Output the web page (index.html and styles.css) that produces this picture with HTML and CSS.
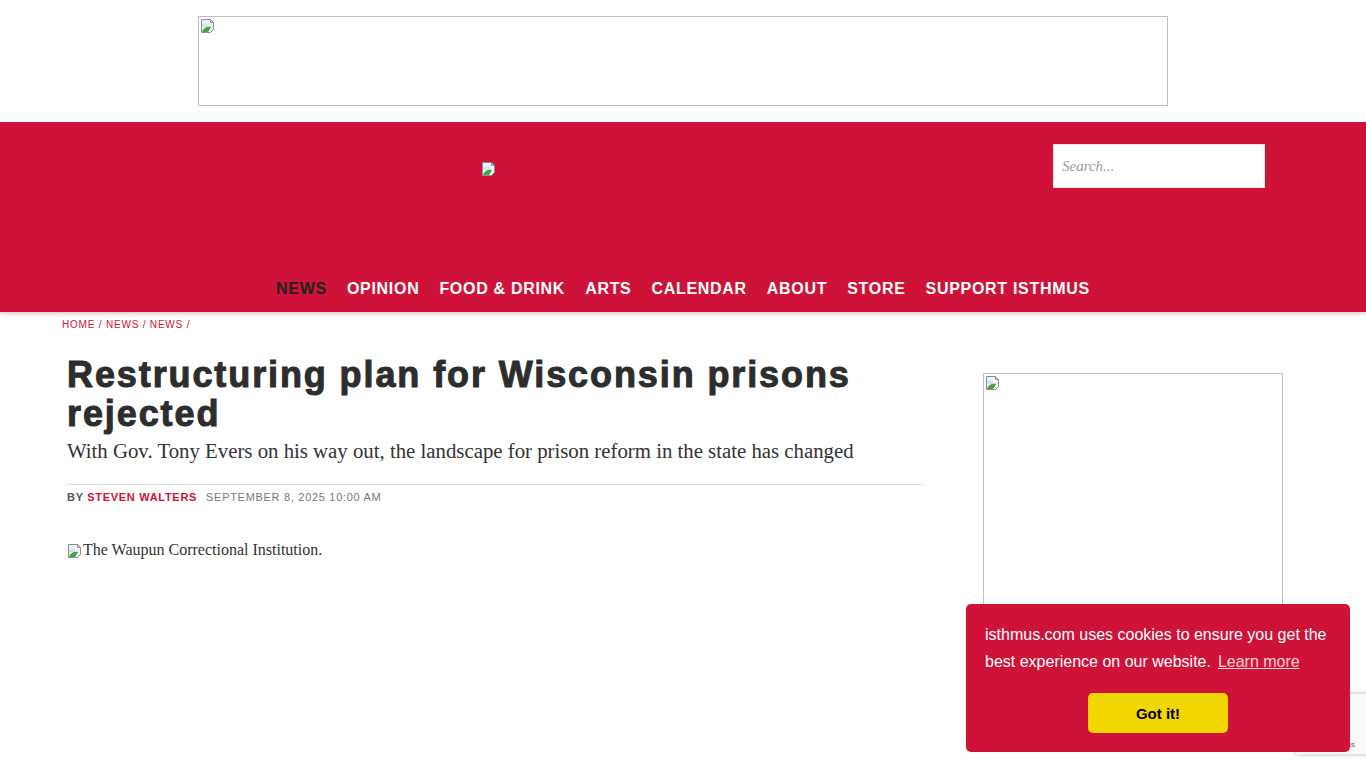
FILE: index.html
```html
<!DOCTYPE html>
<html lang="en">

<head>
    <meta charset="UTF-8">
    <meta name="viewport" content="width=device-width, initial-scale=1.0">
    <title>Restructuring plan for Wisconsin prisons rejected | Isthmus</title>
    <link rel="stylesheet" href="styles.css">
</head>

<body>
    <div class="top-ad">
        <div class="ad-box ad-leader">
            <svg class="broken" width="16" height="16" viewBox="0 0 16 16">
                <path d="M1.5 1.5h9l3 3v7l-3 3h-9z" fill="#eef3f8" stroke="#8a8f96" />
                <path d="M2 6c2-1 4-1 6 0v3H2z" fill="#cfe3f5" />
                <path d="M2 14c1-4 5-6 9-5l-3 5z" fill="#4aa23c" />
                <path d="M10.5 1.5v3h3" fill="none" stroke="#8a8f96" />
            </svg>
        </div>
    </div>

    <header class="masthead">
        <div class="masthead-inner">
            <div class="logo">
                <svg class="broken" width="16" height="16" viewBox="0 0 16 16">
                    <path d="M1.5 1.5h9l3 3v7l-3 3h-9z" fill="#eef3f8" stroke="#8a8f96" />
                    <path d="M2 6c2-1 4-1 6 0v3H2z" fill="#cfe3f5" />
                    <path d="M2 14c1-4 5-6 9-5l-3 5z" fill="#4aa23c" />
                    <path d="M10.5 1.5v3h3" fill="none" stroke="#8a8f96" />
                </svg>
            </div>
            <form class="search">
                <input type="text" placeholder="Search...">
            </form>
        </div>
        <nav class="main-nav">
            <ul>
                <li class="active">News</li>
                <li>Opinion</li>
                <li>Food &amp; Drink</li>
                <li>Arts</li>
                <li>Calendar</li>
                <li>About</li>
                <li>Store</li>
                <li>Support Isthmus</li>
            </ul>
        </nav>
    </header>

    <div class="page">
        <div class="crumbs">Home / News / News /</div>
        <div class="cols">
            <article class="story">
                <h1>Restructuring plan for Wisconsin prisons rejected</h1>
                <p class="dek">With Gov. Tony Evers on his way out, the landscape for prison reform in the state has changed</p>
                <div class="byline">
                    <span>By <a class="author">Steven Walters</a></span>
                    <span class="date">September 8, 2025 10:00 AM</span>
                </div>
                <div class="lead-img">
                    <svg class="broken" width="16" height="16" viewBox="0 0 16 16">
                        <path d="M1.5 1.5h9l3 3v7l-3 3h-9z" fill="#eef3f8" stroke="#8a8f96" />
                        <path d="M2 6c2-1 4-1 6 0v3H2z" fill="#cfe3f5" />
                        <path d="M2 14c1-4 5-6 9-5l-3 5z" fill="#4aa23c" />
                        <path d="M10.5 1.5v3h3" fill="none" stroke="#8a8f96" />
                    </svg><span>The Waupun Correctional Institution.</span>
                </div>
            </article>
            <aside class="rail">
                <div class="ad-box ad-rect">
                    <svg class="broken" width="16" height="16" viewBox="0 0 16 16">
                        <path d="M1.5 1.5h9l3 3v7l-3 3h-9z" fill="#eef3f8" stroke="#8a8f96" />
                        <path d="M2 6c2-1 4-1 6 0v3H2z" fill="#cfe3f5" />
                        <path d="M2 14c1-4 5-6 9-5l-3 5z" fill="#4aa23c" />
                        <path d="M10.5 1.5v3h3" fill="none" stroke="#8a8f96" />
                    </svg>
                </div>
            </aside>
        </div>
    </div>

    <!-- recaptcha badge peeking from the right edge -->
    <div class="recaptcha"><span>Privacy - Terms</span></div>

    <div class="cookie">
        <p>isthmus.com uses cookies to ensure you get the best experience on our website.<a class="learn">Learn more</a></p>
        <button class="got-it">Got it!</button>
    </div>
</body>

</html>
```

FILE: styles.css
```css
* {
    margin: 0;
    padding: 0;
    box-sizing: border-box;
}

body {
    background-color: #fff;
    font-family: "Liberation Sans", Arial, sans-serif;
    color: #333;
}

a {
    text-decoration: none;
    color: inherit;
}

ul li {
    list-style: none;
}

.broken {
    display: block;
}

.ad-box {
    border: 1px solid #c0c0c0;
    padding: 1px;
}

/* top leaderboard */
.top-ad {
    padding: 16px 0;
}

.ad-leader {
    width: 970px;
    height: 90px;
    margin: 0 auto;
}

/* red masthead */
.masthead {
    height: 190px;
    display: flex;
    flex-direction: column;
    background-color: #cf1237;
    box-shadow: 0 2px 4px rgba(207, 18, 55, 0.25);
    position: relative;
}

.masthead-inner {
    display: flex;
    padding: 22px 101px 0 99px;
}

.logo {
    flex: 1;
    padding: 17px 0 0 382px;
}

.search input {
    width: 212px;
    height: 44px;
    border: 1px solid #e5e5e5;
    padding: 1px 8px 0;
    font-family: "Liberation Serif", serif;
    font-style: italic;
    font-size: 15px;
    outline: none;
}

.search input::placeholder {
    color: #999;
}

.main-nav {
    margin-top: auto;
    padding-bottom: 13px;
}

.main-nav ul {
    display: flex;
    justify-content: center;
    gap: 20px;
}

.main-nav li {
    font-size: 16px;
    line-height: 20px;
    font-weight: bold;
    letter-spacing: 0.7px;
    text-transform: uppercase;
    color: #fff;
}

.main-nav li.active {
    color: #222;
}

/* page body */
.page {
    padding: 7px 0 0 62px;
}

.crumbs {
    font-size: 10px;
    line-height: 12px;
    letter-spacing: 0.8px;
    text-transform: uppercase;
    color: #cf1237;
}

.cols {
    display: flex;
    gap: 59px;
    padding-top: 24px;
}

.story {
    width: 862px;
    padding-left: 5px;
}

.story h1 {
    font-size: 36px;
    line-height: 39px;
    font-weight: 900;
    letter-spacing: 1.9px;
    color: #2d2d2d;
    -webkit-text-stroke: 1px #2d2d2d;
}

.dek {
    margin-top: 4px;
    font-family: "Liberation Serif", serif;
    font-size: 20.8px;
    line-height: 28px;
    color: #333;
}

.byline {
    margin-top: 19px;
    border-top: 1px solid #e0e0e0;
    padding-top: 6px;
    display: flex;
    gap: 9px;
    font-size: 11px;
    line-height: 13px;
    font-weight: bold;
    letter-spacing: 0.7px;
    text-transform: uppercase;
    color: #555;
}

.byline .author {
    color: #cf1237;
}

.byline .date {
    color: #777;
    font-weight: normal;
}

.lead-img {
    margin-top: 37px;
    display: flex;
    align-items: flex-end;
    font-family: "Liberation Serif", serif;
    font-size: 16px;
    line-height: 18px;
    color: #333;
}

.rail {
    width: 300px;
    padding-top: 18px;
}

.ad-rect {
    width: 300px;
    height: 250px;
}

/* overlays */
.recaptcha {
    position: fixed;
    right: -186px;
    bottom: 14px;
    width: 256px;
    height: 60px;
    background-color: #f9f9f9;
    box-shadow: 0 0 5px rgba(0, 0, 0, 0.3);
    font-size: 8px;
    color: #555;
}

.recaptcha span {
    position: absolute;
    left: 4px;
    bottom: 5px;
}

.cookie {
    position: fixed;
    right: 16px;
    bottom: 16px;
    width: 384px;
    padding: 17px 19px 19px;
    border-radius: 5px;
    background-color: #cf1237;
    color: #fff;
    font-family: "Liberation Sans", Helvetica, Arial, sans-serif;
}

.cookie p {
    font-size: 16px;
    line-height: 27px;
}

.learn {
    margin-left: 7px;
    text-decoration: underline;
    opacity: 0.8;
}

.got-it {
    display: block;
    width: 140px;
    height: 40px;
    margin: 18px auto 0;
    border: 0;
    border-radius: 5px;
    background-color: #f1d600;
    color: #000;
    font-family: "Liberation Sans", Helvetica, Arial, sans-serif;
    font-size: 15px;
    font-weight: bold;
}
```
